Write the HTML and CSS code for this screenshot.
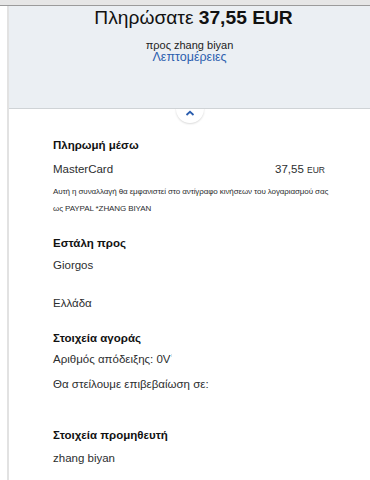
FILE: index.html
```html
<!DOCTYPE html>
<html lang="el">
<head>
<meta charset="UTF-8" />
<meta name="viewport" content="width=device-width, initial-scale=1" />
<title>Πληρώσατε 37,55 EUR</title>
<link rel="stylesheet" href="styles.css">
</head>
<body>

<div class="topbar"></div>

<div class="page">
  <div class="panel">
    <div class="summary">
      <h1 class="total">Πληρώσατε <b>37,55 EUR</b></h1>
      <div class="payee">προς zhang biyan</div>
      <a class="details-link" href="#">Λεπτομέρειες</a>
      <span class="toggle">
        <svg width="10" height="6" viewBox="0 0 10 6"><path d="M1.5 5 L5 1.8 L8.5 5" fill="none" stroke="#2b5eae" stroke-width="1.8"/></svg>
      </span>
    </div>

    <div class="content">
      <div class="block block-pay">
        <h3>Πληρωμή μέσω</h3>
        <div class="row">
          <span>MasterCard</span>
          <span>37,55 <small>EUR</small></span>
        </div>
        <p class="note">Αυτή η συναλλαγή θα εμφανιστεί στο αντίγραφο κινήσεων του λογαριασμού σας<br>ως PAYPAL *ZHANG BIYAN</p>
      </div>

      <div class="block block-ship">
        <h3>Εστάλη προς</h3>
        <p class="line first">Giorgos</p>
        <p class="line country">Ελλάδα</p>
      </div>

      <div class="block block-order">
        <h3>Στοιχεία αγοράς</h3>
        <p class="line first">Αριθμός απόδειξης: 0V<span class="smudge"></span></p>
        <p class="line confirm">Θα στείλουμε επιβεβαίωση σε:</p>
      </div>

      <div class="block block-seller">
        <h3>Στοιχεία προμηθευτή</h3>
        <p class="line first">zhang biyan</p>
      </div>
    </div>
  </div>
</div>

</body>
</html>
```

FILE: styles.css
```css
body {
  margin: 0;
  font-family: "Liberation Sans", Arial, sans-serif;
  color: #2c2e2f;
  background: #fff;
}
.topbar {
  height: 5px;
  background: #e6e6e6;
  border-bottom: 1px solid #9b9b9b;
}
.page {
  padding-left: 7px;
}
.panel {
  border-left: 2px solid #e2e2e2;
  min-height: 474px;
}

/* 上方金額區 */
.summary {
  position: relative;
  height: 102px;
  background: #ebeff3;
  border-bottom: 1px solid #cfd3d6;
  text-align: center;
}
.total {
  margin: 0;
  padding-left: 8px;
  font-size: 19.2px;
  line-height: 23px;
  font-weight: normal;
  color: #111;
}
.payee {
  margin-top: 10px;
  font-size: 11px;
  line-height: 12px;
  color: #222;
}
.details-link {
  display: block;
  font-size: 12.5px;
  line-height: 12px;
  color: #2b5eae;
  text-decoration: none;
}
.toggle {
  position: absolute;
  left: 50%;
  bottom: -15px;
  width: 28px;
  height: 28px;
  margin-left: -14px;
  border-radius: 50%;
  background: #fff;
  box-shadow: 0 1px 2px rgba(0, 0, 0, 0.15);
  clip-path: inset(14px -4px -4px -4px);
  display: flex;
  align-items: center;
  justify-content: center;
}
.toggle svg {
  margin-top: 8px;
}

/* 內容區 */
.content {
  padding: 28px 40px 0 44px;
}
.block h3 {
  margin: 0;
  font-size: 11.5px;
  line-height: 16px;
  font-weight: bold;
  color: #111;
}
.row {
  display: flex;
  justify-content: space-between;
  margin-top: 8px;
  margin-right: 5px;
  font-size: 11.5px;
  line-height: 16px;
}
.row small {
  font-size: 8.5px;
}
.note {
  margin: 5px 0 0;
  font-size: 8px;
  letter-spacing: -0.1px;
  line-height: 17px;
  white-space: nowrap;
}
.line {
  margin: 0;
  font-size: 11.5px;
  line-height: 16px;
}
.line.first {
  margin-top: 6px;
}
.line.country {
  margin-top: 22px;
}
.line.confirm {
  margin-top: 9px;
}
.block-ship {
  margin-top: 18px;
}
.block-order {
  margin-top: 19px;
}
.block-order .line.first {
  margin-top: 5px;
}
.block-seller {
  margin-top: 35px;
}
.block-seller .line.first {
  margin-top: 7px;
}
.smudge {
  display: inline-block;
  width: 1px;
  height: 3px;
  background: #d8e2ea;
  vertical-align: 6px;
}
```
